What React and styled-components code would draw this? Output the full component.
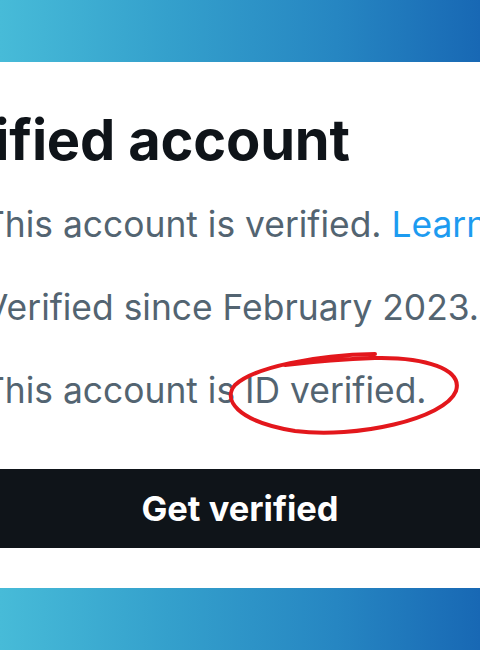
import styled, { createGlobalStyle } from "styled-components";

const GlobalStyle = createGlobalStyle`
  html, body {
    margin: 0;
    padding: 0;
    background: #ffffff;
  }
  body {
    font-family: Inter, "Liberation Sans", sans-serif;
    -webkit-font-smoothing: antialiased;
  }
`;

export default function App() {
  return (
    <>
      <GlobalStyle />
      <Page>
        <Band />
        <Panel>
          <Title $shift={-100}>Verified account</Title>
          <Lines>
            <Line $shift={-18}>
              This account is verified. <Link>Learn more</Link>
            </Line>
            <Line $shift={-16}>Verified since February 2023.</Line>
            <Line $shift={-18}>
              This account is <Marked>ID verified.<Circle /></Marked>
            </Line>
          </Lines>
          <Button type="button">Get verified</Button>
        </Panel>
        <Band />
      </Page>
    </>
  );
}

function Circle() {
  return (
    <Ring viewBox="0 0 236 88" fill="none">
      <path
        d="M150 5 C 90 6, 30 18, 10 36 C -2 50, 10 72, 70 82 C 130 90, 220 70, 231 42 C 238 20, 200 8, 150 9 C 120 10, 85 13, 60 16"
        stroke="#e3171c"
        strokeWidth="4"
        strokeLinecap="round"
      />
    </Ring>
  );
}

const Page = styled.div`
  width: 480px;
  height: 650px;
  display: flex;
  flex-direction: column;
  overflow: hidden;
`;

const Band = styled.div`
  height: 62px;
  flex: none;
  background: linear-gradient(90deg, #47bbd8 0%, #34a0cc 35%, #2686c2 70%, #1868b4 100%);
`;

const Panel = styled.div`
  flex: 1;
  background: #ffffff;
  overflow: hidden;
  display: flex;
  flex-direction: column;
  padding-top: 46px;
`;

const Title = styled.h1`
  margin: 0 0 0 ${({ $shift }) => $shift}px;
  font-size: 56px;
  line-height: 64px;
  font-weight: 700;
  color: #0f1419;
  letter-spacing: -0.2px;
  white-space: nowrap;
`;

const Lines = styled.div`
  display: flex;
  flex-direction: column;
  gap: 40px;
  margin-top: 31px;
`;

const Line = styled.p`
  margin: 0 0 0 ${({ $shift }) => $shift}px;
  font-size: 35.4px;
  line-height: 43px;
  color: #536471;
  white-space: nowrap;
`;

const Link = styled.span`
  color: #1d9bf0;
`;

const Marked = styled.span`
  position: relative;
`;

const Ring = styled.svg`
  position: absolute;
  left: -20px;
  top: -20px;
  width: 236px;
  height: 88px;
  overflow: visible;
  pointer-events: none;
`;

const Button = styled.button`
  margin-top: 57px;
  height: 79px;
  width: 100%;
  border: none;
  background: #0f1419;
  color: #ffffff;
  font-family: Inter, "Liberation Sans", sans-serif;
  font-size: 34.5px;
  font-weight: 700;
  padding: 0;
`;
